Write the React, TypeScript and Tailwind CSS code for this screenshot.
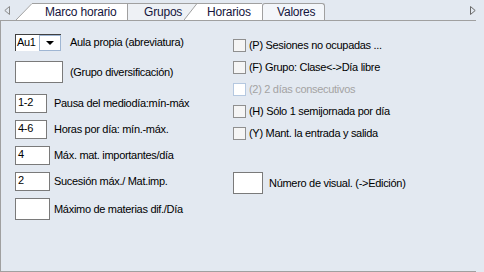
import React from 'react';

const BG = '#e3e9f1';
const LINE = '#a0a0a0';

// diagonal edge of a tab: upper-left part in one colour, lower-right in the other
const Slant: React.FC<{ w: number; left: string; right: string; top?: boolean }> = ({ w, left, right, top }) => (
  <svg width={w} height={17} className="block shrink-0">
    <polygon points={`0,0 ${w},0 0,17`} fill={left} />
    <polygon points={`${w},0 ${w},17 0,17`} fill={right} />
    {top && <line x1="0" y1="0.5" x2={w} y2="0.5" stroke={LINE} />}
    <line x1="0" y1="17" x2={w} y2="0.5" stroke={LINE} />
  </svg>
);

const Field: React.FC<{ value?: string; w: string; h: string }> = ({ value, w, h }) => (
  <div className={`${w} ${h} shrink-0 bg-white border border-[#7a7a7a] pl-[2px] text-black leading-[15px]`}>{value}</div>
);

const Check: React.FC<{ label: string; disabled?: boolean }> = ({ label, disabled }) => (
  <div className="h-[22px] flex items-center">
    <div
      className={`w-[13px] h-[13px] shrink-0 border ${disabled ? 'border-[#b5c8e0] bg-white' : 'border-[#8f8f8f] bg-[#f5f5f5]'}`}
    />
    <span className={`ml-[3px] ${disabled ? 'text-[#a3a3a3]' : 'text-black'}`}>{label}</span>
  </div>
);

const Row: React.FC<{ cell: string; className?: string; children: React.ReactNode; label: string }> = ({
  cell,
  className,
  children,
  label,
}) => (
  <div className={`flex items-center ${className ?? ''}`}>
    <div className={`${cell} shrink-0 flex items-center`}>{children}</div>
    <span>{label}</span>
  </div>
);

export default function App() {
  return (
    <div
      className="w-[484px] h-[272px] overflow-hidden bg-[#e3e9f1]"
      style={{ fontFamily: '"Liberation Sans", Arial, sans-serif' }}
    >
      {/* tab strip */}
      <div className="h-[20px] flex items-end text-[12px] tracking-[-0.2px] text-[#14143c]">
        <div className="w-[16px] h-[20px] flex items-center pl-[4px]">
          <svg width="6" height="9" viewBox="0 0 6 9">
            <path d="M5.5 0.5 L0.8 4.5 L5.5 8.5 Z" fill="none" stroke="#8a8a8a" />
          </svg>
        </div>
        <Slant w={16} left={BG} right="#ffffff" />
        <div className="w-[96px] h-[17px] bg-white border-t border-r border-[#a0a0a0] pl-[13px] leading-[16px]">
          Marco horario
        </div>
        <div className="w-[56px] h-[17px] bg-[#eef1f5] border-t border-[#a0a0a0] pl-[16px] leading-[16px]">
          Grupos
        </div>
        <Slant w={13} left="#eef1f5" right="#ffffff" top />
        <div className="w-[65px] h-[17px] bg-white border-t border-[#a0a0a0] pl-[10px] leading-[16px]">
          Horarios
        </div>
        <div className="w-[63px] h-[17px] bg-[#f3f6fa] border-l border-t border-r border-[#a0a0a0] rounded-t-[3px] pl-[14px] leading-[16px]">
          Valores
        </div>
        <div className="flex-1" />
        <div className="w-[16px] h-[20px] flex items-center pl-[2px]">
          <svg width="6" height="9" viewBox="0 0 6 9">
            <path d="M0.5 0.5 L5.2 4.5 L0.5 8.5 Z" fill="none" stroke="#6a6a6a" />
          </svg>
        </div>
      </div>

      {/* panel */}
      <div className="w-[476px] h-[252px] border-l border-t border-b border-[#a0a0a0] flex text-[11px] tracking-[-0.3px] text-black">
        <div className="w-[232px] pl-[14px] pt-[13px] flex flex-col">
          <Row cell="w-[55px] h-[17px]" label="Aula propia (abreviatura)">
            <div className="w-[46px] h-[17px] flex bg-white border-t border-l border-[#404040]">
              <div className="w-[23px] leading-[14px] pl-[1px]">Au1</div>
              <div className="w-[22px] h-[16px] border border-[#9fb6d3] bg-white flex items-center justify-center">
                <svg width="8" height="4" viewBox="0 0 8 4">
                  <path d="M0 0 H8 L4 4 Z" fill="#000" />
                </svg>
              </div>
            </div>
          </Row>

          <Row cell="w-[55px]" className="mt-[10px]" label="(Grupo diversificación)">
            <Field w="w-[48px]" h="h-[22px]" />
          </Row>

          <Row cell="w-[39px]" className="mt-[11px]" label="Pausa del mediodía:mín-máx">
            <Field value="1-2" w="w-[32px]" h="h-[19px]" />
          </Row>
          <Row cell="w-[39px]" className="mt-[7px]" label="Horas por día: mín.-máx.">
            <Field value="4-6" w="w-[32px]" h="h-[19px]" />
          </Row>
          <Row cell="w-[39px]" className="mt-[7px]" label="Máx. mat. importantes/día">
            <Field value="4" w="w-[35px]" h="h-[19px]" />
          </Row>
          <Row cell="w-[39px]" className="mt-[7px]" label="Sucesión máx./ Mat.imp.">
            <Field value="2" w="w-[35px]" h="h-[19px]" />
          </Row>
          <Row cell="w-[39px]" className="mt-[7px]" label="Máximo de materias dif./Día">
            <Field w="w-[35px]" h="h-[22px]" />
          </Row>
        </div>

        <div className="flex-1 pt-[13px] flex flex-col">
          <Check label="(P) Sesiones no ocupadas ..." />
          <Check label="(F) Grupo: Clase<->Día libre" />
          <Check label="(2) 2 días consecutivos" disabled />
          <Check label="(H) Sólo 1 semijornada por día" />
          <Check label="(Y) Mant. la entrada y salida" />
          <div className="flex items-center mt-[28px]">
            <Field w="w-[30px]" h="h-[22px]" />
            <span className="ml-[6px]">Número de visual. (-&gt;Edición)</span>
          </div>
        </div>
      </div>
    </div>
  );
}
